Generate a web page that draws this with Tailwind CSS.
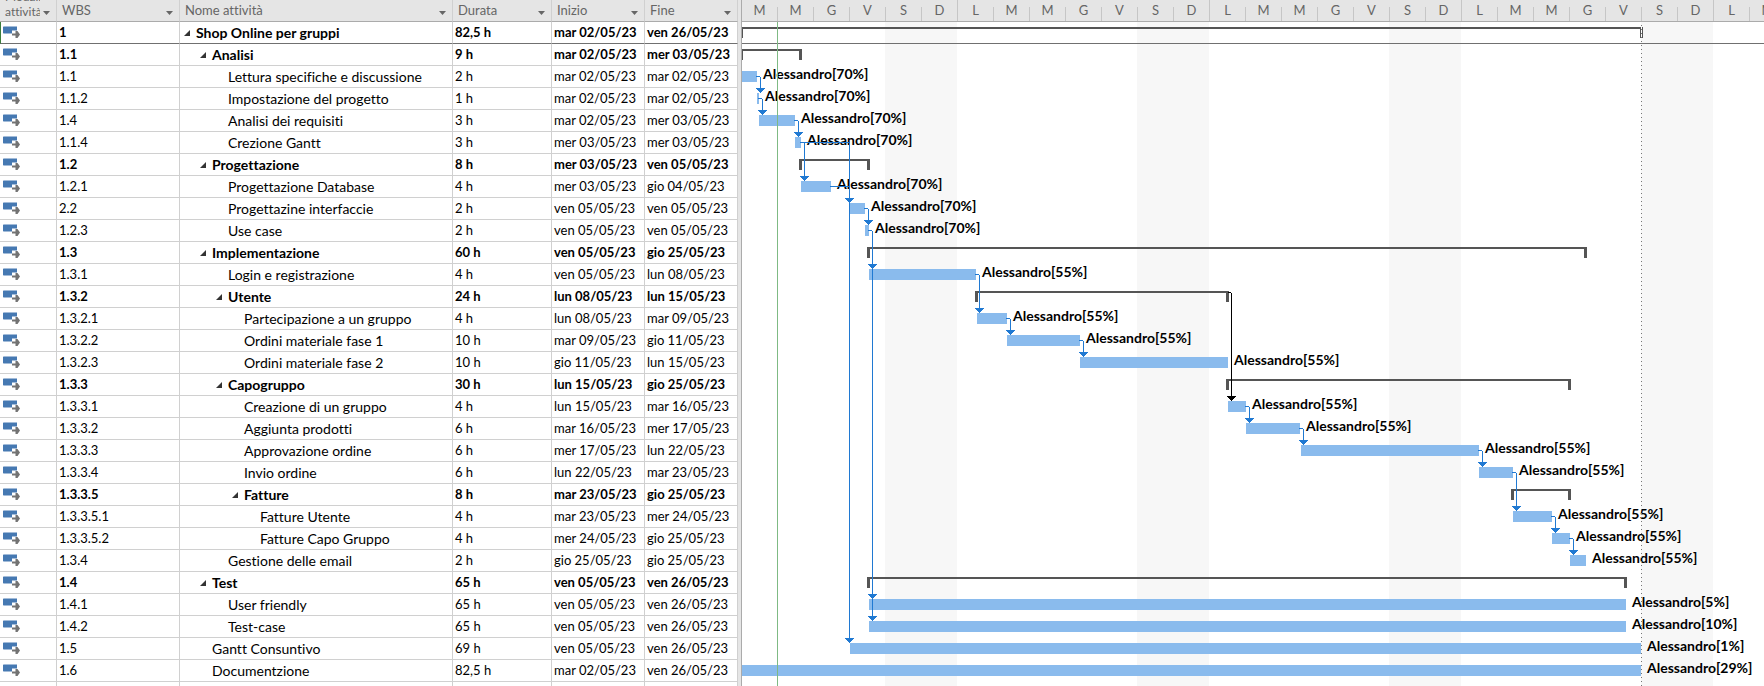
<!DOCTYPE html>
<html lang="it">
<head>
<meta charset="utf-8">
<title>Shop Online per gruppi</title>
<script src="https://cdn.jsdelivr.net/npm/@tailwindcss/browser@4"></script>
</head>
<body class="bg-white overflow-hidden text-black font-[Lato,sans-serif] text-[13px] leading-[21px] [font-variant-ligatures:none]">
<svg class="hidden">
  <symbol id="auto" viewBox="0 0 17 13">
    <path fill="#4679b2" d="M0 1 .5 .5H14v4H9v3H.5L0 7z"/>
    <path fill="#737373" d="M9 7.500h3.500V5h2L17 8.500 14.500 12h-2V9.500H9z"/>
  </symbol>
  <symbol id="open" viewBox="0 0 6 6"><path fill="#333" d="M6 0v6H0z"/></symbol>
  <symbol id="filter" viewBox="0 0 7 4"><path fill="#666" d="M0 0h7L3.500 4z"/></symbol>
</svg>
<main class="flex w-full min-h-screen overflow-hidden">
  <table class="w-[738px] shrink-0 table-fixed border-separate border-spacing-0 self-start">
    <colgroup><col class="w-[57px]"><col class="w-[123px]"><col class="w-[273px]"><col class="w-[99px]"><col class="w-[93px]"><col class="w-[93px]"></colgroup>
    <thead><tr id="head" class="h-[22px] bg-[#e5e5e5] text-[#666]"></tr></thead>
    <tbody id="rows"></tbody>
  </table>
  <div class="w-1 shrink-0 border-r border-[#ababab] bg-[#e5e5e5]"></div>
  <section class="flex min-w-0 flex-1 flex-col overflow-hidden" aria-label="Gantt">
    <div id="days" class="flex h-[22px] shrink-0 overflow-hidden border-b border-[#ababab] bg-[#e5e5e5] text-[#666]"></div>
    <div id="chart" class="relative flex-1 overflow-hidden">
      <div id="weekends" class="absolute inset-0"></div>
      <div id="bars" class="relative"></div>
      <svg id="links" class="absolute inset-0 size-full" shape-rendering="crispEdges" fill="none"></svg>
    </div>
  </section>
</main>
<script>
// wbs, level, name, duration, start, end, bar start, bar end, resource share (none: summary row)
const tasks = [
["1",0,"Shop Online per gruppi","82,5 h","mar 02/05/23","ven 26/05/23",-2,901],
["1.1",1,"Analisi","9 h","mar 02/05/23","mer 03/05/23",-2,60],
["1.1",2,"Lettura specifiche e discussione","2 h","mar 02/05/23","mar 02/05/23",0,15,70],
["1.1.2",2,"Impostazione del progetto","1 h","mar 02/05/23","mar 02/05/23",15,17,70],
["1.4",2,"Analisi dei requisiti","3 h","mar 02/05/23","mer 03/05/23",17,53,70],
["1.1.4",2,"Crezione Gantt","3 h","mer 03/05/23","mer 03/05/23",53,59,70],
["1.2",1,"Progettazione","8 h","mer 03/05/23","ven 05/05/23",57,128],
["1.2.1",2,"Progettazione Database","4 h","mer 03/05/23","gio 04/05/23",59,89,70],
["2.2",2,"Progettazine interfaccie","2 h","ven 05/05/23","ven 05/05/23",108,123,70],
["1.2.3",2,"Use case","2 h","ven 05/05/23","ven 05/05/23",123,127,70],
["1.3",1,"Implementazione","60 h","ven 05/05/23","gio 25/05/23",125,845],
["1.3.1",2,"Login e registrazione","4 h","ven 05/05/23","lun 08/05/23",127,234,55],
["1.3.2",2,"Utente","24 h","lun 08/05/23","lun 15/05/23",233,487],
["1.3.2.1",3,"Partecipazione a un gruppo","4 h","lun 08/05/23","mar 09/05/23",235,265,55],
["1.3.2.2",3,"Ordini materiale fase 1","10 h","mar 09/05/23","gio 11/05/23",265,338,55],
["1.3.2.3",3,"Ordini materiale fase 2","10 h","gio 11/05/23","lun 15/05/23",338,486,55],
["1.3.3",2,"Capogruppo","30 h","lun 15/05/23","gio 25/05/23",484,829],
["1.3.3.1",3,"Creazione di un gruppo","4 h","lun 15/05/23","mar 16/05/23",486,504,55],
["1.3.3.2",3,"Aggiunta prodotti","6 h","mar 16/05/23","mer 17/05/23",504,558,55],
["1.3.3.3",3,"Approvazione ordine","6 h","mer 17/05/23","lun 22/05/23",559,737,55],
["1.3.3.4",3,"Invio ordine","6 h","lun 22/05/23","mar 23/05/23",737,771,55],
["1.3.3.5",3,"Fatture","8 h","mar 23/05/23","gio 25/05/23",769,829],
["1.3.3.5.1",4,"Fatture Utente","4 h","mar 23/05/23","mer 24/05/23",771,810,55],
["1.3.3.5.2",4,"Fatture Capo Gruppo","4 h","mer 24/05/23","gio 25/05/23",810,828,55],
["1.3.4",2,"Gestione delle email","2 h","gio 25/05/23","gio 25/05/23",828,844,55],
["1.4",1,"Test","65 h","ven 05/05/23","ven 26/05/23",125,885],
["1.4.1",2,"User friendly","65 h","ven 05/05/23","ven 26/05/23",127,884,5],
["1.4.2",2,"Test-case","65 h","ven 05/05/23","ven 26/05/23",127,884,10],
["1.5",1,"Gantt Consuntivo","69 h","ven 05/05/23","ven 26/05/23",108,899,1],
["1.6",1,"Documentzione","82,5 h","mar 02/05/23","ven 26/05/23",0,899,29]];
// from row, line x, target rows, colour
const links = [[2,18,[3]],[3,20,[4]],[4,56,[5]],[5,62,[7]],[5,107,[8,28]],[7,107,[8]],[8,126,[9]],[9,130,[11,26,27]],
[11,237,[13]],[13,268,[14]],[14,341,[15]],[17,507,[18]],[18,561,[19]],[19,740,[20]],[20,774,[22]],[22,813,[23]],[23,831,[24]],[12,489,[17],"#000"]];

const $ = id => document.getElementById(id);
const filter = label => `<button class="mt-1 flex shrink-0" aria-label="Filtra ${label}"><svg class="h-1 w-[7px]"><use href="#filter"/></svg></button>`;
const th = "h-[22px] border-r border-b border-r-[#d0d0d0] border-b-[#ababab] p-0 text-left font-normal";
$("head").innerHTML = `<th class="${th}"><div class="flex h-[21px] items-center justify-between overflow-hidden pr-1.5 pl-[5px]"><span class="flex h-[21px] w-[35px] items-end overflow-hidden pb-0.5 text-xs leading-[15px]">Modalità attività</span>${filter("Modalità attività")}</div></th>` +
 ["WBS","Nome attività","Durata","Inizio","Fine"].map(t => `<th class="${th}"><div class="flex h-[21px] items-center justify-between pl-[5px] pr-1.5"><span>${t}</span>${filter(t)}</div></th>`).join("");

$("rows").innerHTML = tasks.map(([wbs,lvl,name,dur,from,to,,,pct],i) => {
  const line = i ? "border-b-[#d0d0d0]" : "border-b-[#707070]";
  const td = (c,x="pl-[2px]") => `<td class="border-r border-b border-r-[#d0d0d0] whitespace-nowrap p-0 ${line} ${x}">${c}</td>`;
  return `<tr class="h-[22px] ${pct ? "" : "font-bold"}">` +
   td('<svg class="h-[13px] w-[17px]"><use href="#auto"/></svg>', i ? "pl-[3px]" : "border-l border-l-[#3b7d3b] pl-[2px]") + td(wbs) +
   td(`<div class="flex items-center gap-1.5 text-sm leading-[21px]" style="padding-left:${2+lvl*16}px"><span class="w-1.5 shrink-0">${pct ? "" : '<svg class="size-1.5"><use href="#open"/></svg>'}</span>${name}</div>`) +
   td(dur) + td(from) + td(to) + "</tr>";
}).join("") + '<tr class="h-1" aria-hidden="true">' + '<td class="border-r border-[#d0d0d0] p-0"></td>'.repeat(6) + "</tr>";

$("days").innerHTML = Array.from({length:29}, (_,i) => {
  const d = "MMGVSDL"[i%7];
  return `<div class="flex h-full w-9 shrink-0 items-end"><span class="flex-1 self-center text-center">${d}</span><span class="w-px bg-[#c6c6c6] ${d === "D" ? "h-full" : "h-3.5"}"></span></div>`;
}).join("");
$("weekends").innerHTML = [0,1,2,3].map(i => `<div class="absolute inset-y-0 w-[72px] bg-[#f7f7f7]" style="left:${143+252*i}px"></div>`).join("");

$("bars").innerHTML = tasks.map(([,,,,,,a,b,pct],i) => `<div class="relative h-[22px] ${i ? "" : "border-b border-[#707070]"}">` +
  (pct ? `<div class="absolute top-[5px] h-[11px] bg-[#8abbed]" style="left:${a}px;width:${b-a}px"></div><span class="absolute top-0 whitespace-nowrap text-sm leading-4 font-bold" style="left:${b+6}px">Alessandro[${pct}%]</span>`
  : `<div class="absolute top-[5px] h-[11px] border-x-3 border-t-2 border-[#555]" style="left:${a}px;width:${b-a}px"></div>`) + "</div>").join("");

const arrow = (x,y,c) => `<path fill="${c}" d="M${x-4} ${y}h9v1h-1v1h-1v1h-1v1h-1v1h-1v-1h-1v-1h-1v-1h-1v-1h-1z"/>`;
$("links").innerHTML = `<path stroke="#7fba84" d="M35.500 0V664"/><path stroke="#fff" d="M899.500 5V16"/><path stroke="#777" stroke-dasharray="1 3" d="M899.500 3V664"/>` +
 links.map(([r,x,to,c="#2079d2"]) => {
  const y = r*22 + (c === "#000" ? 6 : 10), x0 = tasks[r][7], end = to[to.length-1]*22;
  return `<path stroke="${c}" d="M${x0-1} ${y}.500H${x-1}.500M${x}.500 ${y+1}V${end}"/>` + to.map(t => arrow(x,t*22,c)).join("");
}).join("");
</script>
</body>
</html>
